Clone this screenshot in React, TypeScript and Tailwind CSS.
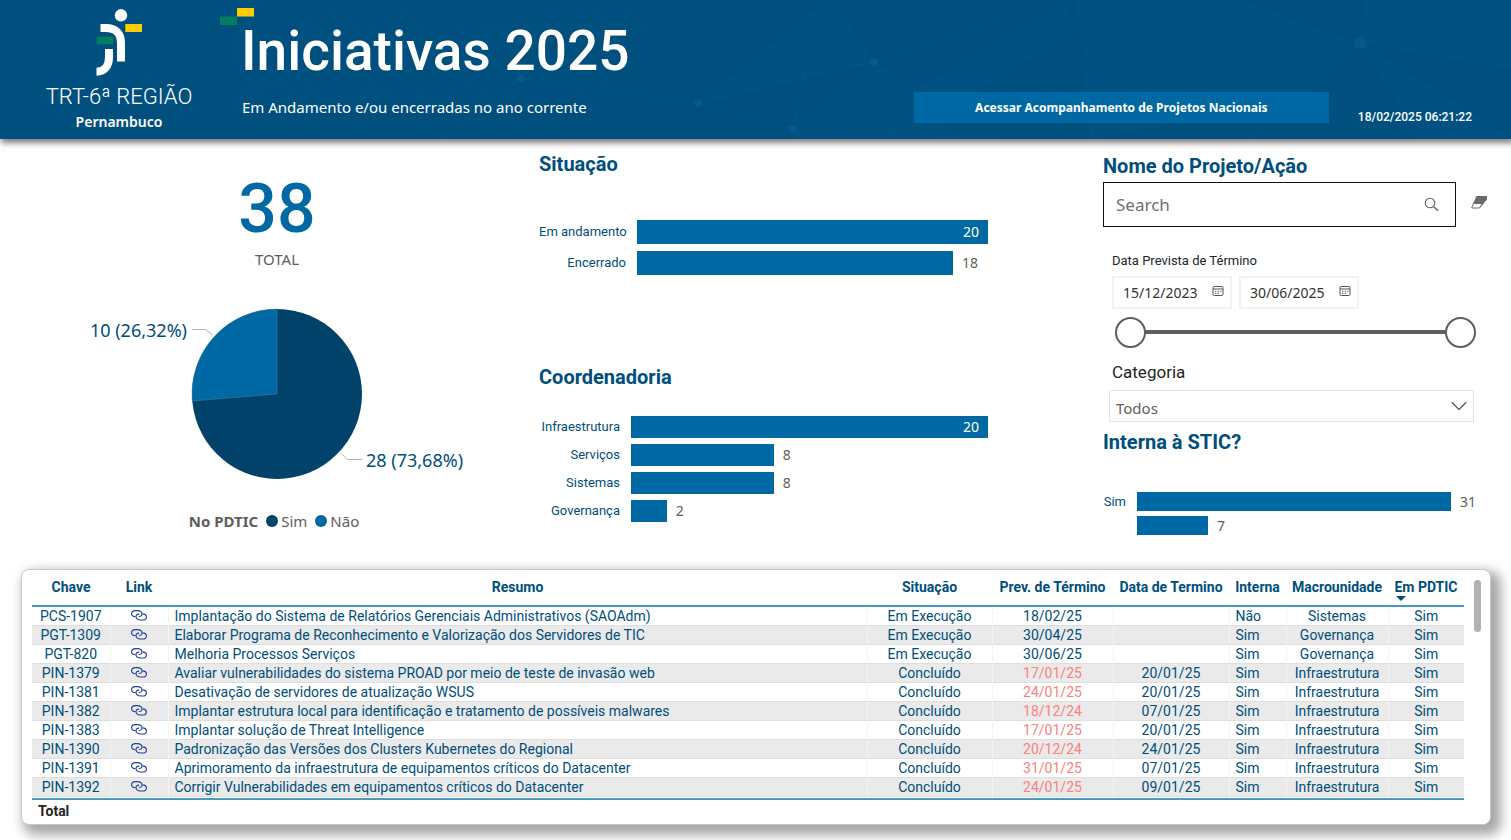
import { useState } from "react";
import { ChevronDown } from "lucide-react";

type Bar = { label: string; value: number };

const situacao: Bar[] = [
  { label: "Em andamento", value: 20 },
  { label: "Encerrado", value: 18 },
];
const coordenadoria: Bar[] = [
  { label: "Infraestrutura", value: 20 },
  { label: "Serviços", value: 8 },
  { label: "Sistemas", value: 8 },
  { label: "Governança", value: 2 },
];
const interna: Bar[] = [
  { label: "Sim", value: 31 },
  { label: "", value: 7 },
];

type Row = {
  chave: string;
  resumo: string;
  situacao: string;
  prev: string;
  late?: boolean;
  fim: string;
  interna: string;
  macro: string;
};

const rows: Row[] = [
  { chave: "PCS-1907", resumo: "Implantação do Sistema de Relatórios Gerenciais Administrativos (SAOAdm)", situacao: "Em Execução", prev: "18/02/25", fim: "", interna: "Não", macro: "Sistemas" },
  { chave: "PGT-1309", resumo: "Elaborar Programa de Reconhecimento e Valorização dos Servidores de TIC", situacao: "Em Execução", prev: "30/04/25", fim: "", interna: "Sim", macro: "Governança" },
  { chave: "PGT-820", resumo: "Melhoria Processos Serviços", situacao: "Em Execução", prev: "30/06/25", fim: "", interna: "Sim", macro: "Governança" },
  { chave: "PIN-1379", resumo: "Avaliar vulnerabilidades do sistema PROAD por meio de teste de invasão web", situacao: "Concluído", prev: "17/01/25", late: true, fim: "20/01/25", interna: "Sim", macro: "Infraestrutura" },
  { chave: "PIN-1381", resumo: "Desativação de servidores de atualização WSUS", situacao: "Concluído", prev: "24/01/25", late: true, fim: "20/01/25", interna: "Sim", macro: "Infraestrutura" },
  { chave: "PIN-1382", resumo: "Implantar estrutura local para identificação e tratamento de possíveis malwares", situacao: "Concluído", prev: "18/12/24", late: true, fim: "07/01/25", interna: "Sim", macro: "Infraestrutura" },
  { chave: "PIN-1383", resumo: "Implantar solução de Threat Intelligence", situacao: "Concluído", prev: "17/01/25", late: true, fim: "20/01/25", interna: "Sim", macro: "Infraestrutura" },
  { chave: "PIN-1390", resumo: "Padronização das Versões dos Clusters Kubernetes do Regional", situacao: "Concluído", prev: "20/12/24", late: true, fim: "24/01/25", interna: "Sim", macro: "Infraestrutura" },
  { chave: "PIN-1391", resumo: "Aprimoramento da infraestrutura de equipamentos críticos do Datacenter", situacao: "Concluído", prev: "31/01/25", late: true, fim: "07/01/25", interna: "Sim", macro: "Infraestrutura" },
  { chave: "PIN-1392", resumo: "Corrigir Vulnerabilidades em equipamentos críticos do Datacenter", situacao: "Concluído", prev: "24/01/25", late: true, fim: "09/01/25", interna: "Sim", macro: "Infraestrutura" },
];

function Network() {
  return (
    <svg className="absolute inset-0 h-full w-full" viewBox="0 0 1511 139" preserveAspectRatio="xMaxYMid slice" aria-hidden="true">
      <g fill="#0a6396" fillOpacity="0.14">
        <path d="M830 0L698 103L874 62Z" />
        <path d="M793 129L874 62L914 92L960 139H790Z" fillOpacity="0.1" />
        <path d="M1075 0H1240L1360 43L1290 105L1090 139Z" fillOpacity="0.1" />
        <path d="M914 92L1065 5L1080 30L960 100Z" />
        <path d="M1360 43L1511 70V0H1365Z" />
        <path d="M1360 43L1511 139H1420Z" />
      </g>
      <g stroke="#1272a4" strokeOpacity="0.15" fill="none">
        <path d="M440 139L521 78L698 103L793 129L874 62L830 0L698 103L874 62L930 100" />
        <path d="M793 129L1000 139M874 62L890 139M874 62L1000 20M805 70L793 129M914 92L1070 0M1085 0L1092 139M1250 139L1360 43L1365 0M1360 43L1511 139" />
      </g>
      <g fill="#1272a4" fillOpacity="0.25">
        <circle cx="521" cy="78" r="4" />
        <circle cx="698" cy="103" r="4" />
        <circle cx="793" cy="129" r="4" />
        <circle cx="874" cy="62" r="4" />
        <circle cx="1360" cy="43" r="6" />
      </g>
    </svg>
  );
}

function LogoMark() {
  return (
    <svg width="50" height="68" viewBox="94 8 50 68" aria-hidden="true">
      <circle cx="121" cy="15.3" r="6.2" fill="#fff" />
      <rect x="125.3" y="24" width="16.7" height="8" fill="#fecb00" />
      <rect x="96.7" y="36.5" width="16.4" height="7.8" fill="#007e5f" />
      <g fill="none" stroke="#fff" strokeWidth="8">
        <path d="M100.5 28H106C115.5 28 121 33.500 121 43V61.500" />
        <path d="M109 49V57C109 66 104.500 71.700 96.500 71.700" />
      </g>
    </svg>
  );
}

function LinkIcon() {
  const half = "M4.600 6.700C2 6.600 .6 5.400 .6 3.700C.6 1.900 2.200 .6 4.400 .6H6.200C9.300 .6 11 2 11 4C11 5.600 9.800 6.600 7.800 6.500";
  return (
    <svg width="16" height="11" viewBox="0 0 16 11" fill="none" stroke="#1f3f9c" strokeWidth="1.1" aria-hidden="true">
      <path d={half} />
      <path d={half} transform="rotate(180 8 5.300)" />
    </svg>
  );
}

function SearchIcon() {
  return (
    <svg width="15" height="15" viewBox="0 0 15 15" fill="none" stroke="#666" strokeWidth="1.1" aria-hidden="true">
      <circle cx="6" cy="6" r="4.800" />
      <path d="M9.500 9.500L14 13.800" strokeWidth="1.500" />
    </svg>
  );
}

function CalendarIcon() {
  return (
    <svg width="12" height="12" viewBox="0 0 12 12" fill="none" stroke="#555" aria-hidden="true">
      <rect x="1" y="1.500" width="10" height="9" rx="1.200" />
      <path d="M1 4H11" />
      <path d="M3 6.300H9.500M3 8.400H7.500" strokeDasharray="1.300 1.300" />
    </svg>
  );
}

function EraserIcon() {
  return (
    <svg width="16" height="13" viewBox="0 0 16 13" aria-hidden="true">
      <path d="M5.500 0H16V3.500L9 12L11 8H1.800Z" fill="#6b6b6b" />
      <path d="M2.200 8L.7 12H8.500L11 8" fill="none" stroke="#6b6b6b" />
    </svg>
  );
}

function BarRows({ bars, max, labelClass, rowClass, gapClass, insideTop }: { bars: Bar[]; max: number; labelClass: string; rowClass: string; gapClass: string; insideTop?: boolean }) {
  return (
    <ul className={`flex flex-col ${gapClass}`}>
      {bars.map((b, i) => {
        const inside = insideTop && b.value === max;
        return (
          <li key={i} className={`flex items-center gap-[11px] ${rowClass}`}>
            <span className={`shrink-0 whitespace-nowrap text-right font-[Roboto,sans-serif] text-[13px] text-[#004e7c] ${labelClass}`}>{b.label}</span>
            <span className="flex h-full min-w-0 flex-1 items-center">
              <span className="flex h-full shrink-0 items-center justify-end bg-[#0069a3] pr-[9px] text-sm text-white" style={{ width: `${(b.value / max) * 100}%` }}>
                {inside ? b.value : null}
              </span>
              {!inside && <span className="pl-[9px] text-sm text-[#605e5c]">{b.value}</span>}
            </span>
          </li>
        );
      })}
    </ul>
  );
}

const panelTitle = "font-[Roboto,sans-serif] text-xl leading-6 font-bold text-[#004e7c]";
const thumb =
  "pointer-events-none absolute inset-0 m-0 h-full w-full appearance-none bg-transparent [&::-webkit-slider-thumb]:pointer-events-auto [&::-webkit-slider-thumb]:size-[31px] [&::-webkit-slider-thumb]:appearance-none [&::-webkit-slider-thumb]:rounded-full [&::-webkit-slider-thumb]:border-2 [&::-webkit-slider-thumb]:border-solid [&::-webkit-slider-thumb]:border-[#605e5c] [&::-webkit-slider-thumb]:bg-white";

function DateField({ label, initial }: { label: string; initial: string }) {
  const [value, setValue] = useState(initial);
  return (
    <div className="flex h-[33px] w-[120px] items-center justify-between border-2 border-[#f2f2f2] pr-[6px] pl-[9px]">
      <input aria-label={label} value={value} onChange={(e) => setValue(e.target.value)} className="w-[80px] text-sm text-[#333] outline-none" />
      <button type="button" aria-label={`Abrir calendário: ${label}`} className="pb-1">
        <CalendarIcon />
      </button>
    </div>
  );
}

function Filters() {
  const [from, setFrom] = useState(0);
  const [to, setTo] = useState(100);
  return (
    <section className="flex flex-col pt-[15px] pr-6">
      <label htmlFor="busca" className={panelTitle}>Nome do Projeto/Ação</label>
      <div className="mt-1 flex items-center gap-[15px]">
        <div className="flex h-[45px] flex-1 items-center border border-[#111] pr-4 pl-3">
          <input id="busca" type="search" placeholder="Search" className="min-w-0 flex-1 text-[17px] outline-none placeholder:text-[#707070]" />
          <SearchIcon />
        </div>
        <button type="button" aria-label="Limpar" className="pb-1">
          <EraserIcon />
        </button>
      </div>

      <div className="mt-6 ml-[9px] font-[Roboto,sans-serif] text-[13px] leading-5 text-[#252423]">Data Prevista de Término</div>
      <div className="mt-[5px] ml-[9px] flex gap-[7px]">
        <DateField label="Data inicial" initial="15/12/2023" />
        <DateField label="Data final" initial="30/06/2025" />
      </div>
      <div className="relative mt-[7px] mr-[11px] ml-[12px] flex h-[32px] items-center">
        <div className="mx-4 h-1 flex-1 bg-[#605e5c]" />
        <input type="range" aria-label="Início do período" value={from} onChange={(e) => setFrom(Math.min(+e.target.value, to))} className={thumb} />
        <input type="range" aria-label="Fim do período" value={to} onChange={(e) => setTo(Math.max(+e.target.value, from))} className={thumb} />
      </div>

      <label htmlFor="categoria" className="mt-3 ml-[9px] font-[Roboto,sans-serif] text-[17px] leading-6 text-[#252423]">Categoria</label>
      <div className="mt-[6px] mr-[13px] ml-[6px] grid h-8 items-center border border-[#e4e4e4]">
        <select id="categoria" className="col-start-1 row-start-1 h-full w-full appearance-none bg-white pt-1 pl-[6px] text-[15px] text-[#605e5c] outline-none">
          <option>Todos</option>
        </select>
        <ChevronDown size={28} strokeWidth={1} className="pointer-events-none col-start-1 row-start-1 justify-self-end text-[#555]" />
      </div>

      <h2 className={`mt-2 ${panelTitle}`}>Interna à STIC?</h2>
      <div className="mt-[38px] mr-[36px]">
        <BarRows bars={interna} max={31} labelClass="w-[23px]" rowClass="h-[19px]" gapClass="gap-[5px]" />
      </div>
    </section>
  );
}

export default function App() {
  return (
    <div className="flex min-h-screen flex-col bg-white font-['Noto_Sans','Open_Sans',sans-serif]">
      <header className="relative flex bg-[#00507f] pb-2 shadow-[2px_3px_6px_1px_rgba(0,0,0,0.5)]">
        <Network />
        <div className="relative ml-[40px] flex w-[158px] flex-col items-center pt-2 text-white">
          <LogoMark />
          <span className="mt-1 font-[Roboto,sans-serif] text-[22px] leading-[33px] font-light whitespace-nowrap">TRT-6ª REGIÃO</span>
          <span className="text-sm leading-[18px] font-semibold">Pernambuco</span>
        </div>
        <div className="relative ml-[22px] flex-1 pt-2 text-white">
          <svg width="34" height="17" viewBox="0 0 34 17" aria-hidden="true">
            <rect x="17" y="0" width="17" height="8.500" fill="#fecb00" />
            <rect x="0" y="8.500" width="17" height="8.500" fill="#007e5f" />
          </svg>
          <h1 className="pl-[21px] font-[Roboto,sans-serif] text-[55px] leading-[52px] font-medium whitespace-nowrap">Iniciativas 2025</h1>
          <p className="mt-[19px] pl-[22px] text-[15px] leading-[22px]">Em Andamento e/ou encerradas no ano corrente</p>
        </div>
        <div className="relative flex items-end gap-[29px] pr-[39px] pb-2 text-white">
          <a href="#nacionais" className="flex h-[31px] w-[415px] items-center justify-center bg-[#0069a3] text-xs font-bold whitespace-nowrap">Acessar Acompanhamento de Projetos Nacionais</a>
          <time className="font-[Roboto,sans-serif] text-xs leading-3 font-medium whitespace-nowrap">18/02/2025 06:21:22</time>
        </div>
      </header>

      <main className="relative flex flex-1 flex-col">
        <div className="grid grid-cols-[539fr_564fr_408fr]">
          <section className="flex flex-col items-center pt-[35px] pl-[15px]">
            <div className="font-[Roboto,sans-serif] text-[68px] leading-[70px] font-medium text-[#0069a3]">38</div>
            <div className="mt-1 text-[15px] leading-[22px] text-[#605e5c]">TOTAL</div>
            <svg className="mt-[34px] text-lg" width="400" height="180" viewBox="77 304 400 180" role="img" aria-label="No PDTIC">
              <circle cx="277" cy="394" r="85" fill="#004269" />
              <path d="M277 394V309A85 85 0 0 0 192.300 401Z" fill="#0069a3" stroke="#3d86b0" strokeWidth="0.500" />
              <path d="M192 329.500H206L213 335.500M340.500 453L347.500 459.500H362" fill="none" stroke="#b3b3b3" />
              <text x="187" y="337" textAnchor="end" fill="#004e7c">10 (26,32%)</text>
              <text x="366" y="467" fill="#004e7c">28 (73,68%)</text>
            </svg>
            <div className="mt-[26px] flex items-center gap-2 pr-[6px] text-[15px] leading-[22px] text-[#605e5c]">
              <span className="font-bold">No PDTIC</span>
              <span className="flex items-center gap-[3px]"><i className="size-3 rounded-full bg-[#004269]" />Sim</span>
              <span className="flex items-center gap-[3px]"><i className="size-3 rounded-full bg-[#0069a3]" />Não</span>
            </div>
          </section>

          <section className="flex flex-col pt-[13px] pr-[115px]">
            <h2 className={panelTitle}>Situação</h2>
            <div className="mt-11">
              <BarRows bars={situacao} max={20} labelClass="w-[87px]" rowClass="h-6" gapClass="gap-[7px]" insideTop />
            </div>
            <h2 className={`mt-[90px] ${panelTitle}`}>Coordenadoria</h2>
            <div className="mt-[27px]">
              <BarRows bars={coordenadoria} max={20} labelClass="w-[81px]" rowClass="h-[22px]" gapClass="gap-[6px]" insideTop />
            </div>
          </section>

          <Filters />
        </div>

        <section className="mr-5 mt-auto mb-[15px] ml-[21px] flex rounded-lg border border-[#c8c8c8] bg-white pb-[3px] pl-[10px] shadow-[6px_6px_12px_4px_rgba(0,0,0,0.35)]">
          <table className="min-w-0 flex-1 table-fixed border-collapse font-[Roboto,sans-serif] text-sm text-[#004e7c]">
            <colgroup>
              <col className="w-[78px]" />
              <col className="w-[58px]" />
              <col />
              <col className="w-[125px]" />
              <col className="w-[121px]" />
              <col className="w-[116px]" />
              <col className="w-[57px]" />
              <col className="w-[102px]" />
              <col className="w-[76px]" />
            </colgroup>
            <thead>
              <tr className="h-9 border-b-2 border-[#4a97c2] whitespace-nowrap [&>th]:p-0 [&>th]:font-bold">
                <th>Chave</th>
                <th>Link</th>
                <th>Resumo</th>
                <th>Situação</th>
                <th>Prev. de Término</th>
                <th>Data de Termino</th>
                <th>Interna</th>
                <th>Macrounidade</th>
                <th aria-sort="descending" className="relative">
                  Em PDTIC
                  <svg className="absolute bottom-1 left-2" width="10" height="5" viewBox="0 0 10 5" aria-hidden="true">
                    <path d="M0 0H10L5 5Z" fill="#004e7c" />
                  </svg>
                </th>
              </tr>
            </thead>
            <tbody>
              {rows.map((r) => (
                <tr key={r.chave} className="h-[19px] text-center leading-[18px] whitespace-nowrap even:border-y even:border-[#dedede] even:bg-[#eaeaea] [&>td]:p-0 [&>td+td]:border-l [&>td+td]:border-[#f4f4f4]">
                  <td>{r.chave}</td>
                  <td>
                    <a href={`#${r.chave}`} aria-label={`Abrir ${r.chave}`} className="flex justify-center">
                      <LinkIcon />
                    </a>
                  </td>
                  <td className="text-left"><span className="pl-[6px]">{r.resumo}</span></td>
                  <td>{r.situacao}</td>
                  <td className={r.late ? "text-[#fd8080]" : ""}>{r.prev}</td>
                  <td>{r.fim}</td>
                  <td className="text-left"><span className="pl-[6px]">{r.interna}</span></td>
                  <td>{r.macro}</td>
                  <td>Sim</td>
                </tr>
              ))}
              <tr className="h-[3px]"><td colSpan={9} className="p-0" /></tr>
            </tbody>
            <tfoot>
              <tr className="h-[22px] border-t-2 border-[#4a97c2]">
                <th colSpan={9} scope="row" className="p-0 pl-[6px] text-left leading-5 font-bold text-[#252423]">Total</th>
              </tr>
            </tfoot>
          </table>
          <div className="ml-[10px] w-[16px] shrink-0 pt-[10px]">
            <div className="h-[52px] w-[7px] rounded-full bg-[#b3b0ad]" />
          </div>
        </section>
      </main>
    </div>
  );
}
